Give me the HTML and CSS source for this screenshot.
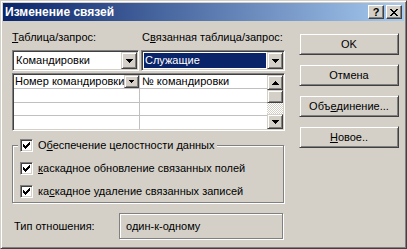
FILE: index.html
```html
<!DOCTYPE html>
<html>
<head>
	<title>Изменение связей</title>

	<link rel="stylesheet" href="styles.css">
</head>
<body>

	<div class="window">
		<div class="titlebar">
			<span class="title">Изменение связей</span>
			<span class="caption-btn help">?</span>
			<span class="caption-btn close">
				<svg width="8" height="7" viewBox="0 0 8 7" shape-rendering="crispEdges"><path d="M0 0h2v1H0z M6 0h2v1H6z M1 1h2v1H1z M5 1h2v1H5z M2 2h4v1H2z M3 3h2v1H3z M2 4h4v1H2z M1 5h2v1H1z M5 5h2v1H5z M0 6h2v1H0z M6 6h2v1H6z"/></svg>
			</span>
		</div>

		<div class="dialog">
			<div class="main">
				<div class="labels">
					<span class="label-left"><u>Т</u>аблица/запрос:</span>
					<span>С<u>в</u>язанная таблица/запрос:</span>
				</div>

				<div class="combos">
					<div class="combo combo-left">
						<span class="combo-text">Командировки</span>
						<span class="drop"><svg class="arrow" width="7" height="4" viewBox="0 0 7 4" shape-rendering="crispEdges"><path d="M0 0h7v1H0z M1 1h5v1H1z M2 2h3v1H2z M3 3h1v1H3z"/></svg></span>
					</div>
					<div class="combo combo-right">
						<span class="combo-text selected">Служащие</span>
						<span class="drop"><svg class="arrow" width="7" height="4" viewBox="0 0 7 4" shape-rendering="crispEdges"><path d="M0 0h7v1H0z M1 1h5v1H1z M2 2h3v1H2z M3 3h1v1H3z"/></svg></span>
					</div>
				</div>

				<!-- field pairs of the relation -->
				<div class="grid">
					<div class="grid-rows">
						<div class="row">
							<div class="cell cell-first">
								<span class="cell-text">Номер командировки</span>
								<span class="cell-drop"><svg width="5" height="3" viewBox="0 0 5 3" shape-rendering="crispEdges"><path d="M0 0h5v1H0z M1 1h3v1H1z M2 2h1v1H2z"/></svg></span>
							</div>
							<div class="cell">№ командировки</div>
						</div>
						<div class="row">
							<div class="cell cell-first"></div>
							<div class="cell"></div>
						</div>
						<div class="row">
							<div class="cell cell-first"></div>
							<div class="cell"></div>
						</div>
						<div class="row">
							<div class="cell cell-first"></div>
							<div class="cell"></div>
						</div>
					</div>
					<div class="scrollbar">
						<span class="scroll-btn scroll-up"><svg width="7" height="4" viewBox="0 0 7 4" shape-rendering="crispEdges"><path d="M3 0h1v1H3z M2 1h3v1H2z M1 2h5v1H1z M0 3h7v1H0z"/></svg></span>
						<span class="scroll-thumb"></span>
						<span class="scroll-track"></span>
						<span class="scroll-btn"><svg width="7" height="4" viewBox="0 0 7 4" shape-rendering="crispEdges"><path d="M0 0h7v1H0z M1 1h5v1H1z M2 2h3v1H2z M3 3h1v1H3z"/></svg></span>
					</div>
				</div>

				<div class="group">
					<div class="check legend">
						<span class="box"><svg width="7" height="7" viewBox="0 0 7 7" shape-rendering="crispEdges"><path d="M0 2h1v3H0z M1 3h1v3H1z M2 4h1v3H2z M3 3h1v3H3z M4 2h1v3H4z M5 1h1v3H5z M6 0h1v3H6z"/></svg></span>
						<span>О<u>б</u>еспечение целостности данных</span>
					</div>
					<div class="check">
						<span class="box"><svg width="7" height="7" viewBox="0 0 7 7" shape-rendering="crispEdges"><path d="M0 2h1v3H0z M1 3h1v3H1z M2 4h1v3H2z M3 3h1v3H3z M4 2h1v3H4z M5 1h1v3H5z M6 0h1v3H6z"/></svg></span>
						<span><u>к</u>аскадное обновление связанных полей</span>
					</div>
					<div class="check">
						<span class="box"><svg width="7" height="7" viewBox="0 0 7 7" shape-rendering="crispEdges"><path d="M0 2h1v3H0z M1 3h1v3H1z M2 4h1v3H2z M3 3h1v3H3z M4 2h1v3H4z M5 1h1v3H5z M6 0h1v3H6z"/></svg></span>
						<span>ка<u>с</u>кадное удаление связанных записей</span>
					</div>
				</div>

				<div class="relation">
					<span class="relation-label">Тип отношения:</span>
					<span class="relation-value">один-к-одному</span>
				</div>
			</div>

			<div class="buttons">
				<span class="btn">OK</span>
				<span class="btn">Отмена</span>
				<span class="btn">Объ<u>е</u>динение...</span>
				<span class="btn"><u>Н</u>овое..</span>
			</div>
		</div>
	</div>

</body>
</html>
```

FILE: styles.css
```css
* {
	box-sizing: border-box;
}
body {
	margin: 0;
	font: 11px/13px "Liberation Sans", Arial, sans-serif;
	color: #000;
}
u {
	text-decoration: underline;
	text-underline-offset: 1px;
}

/* window frame */
.window {
	width: 407px;
	height: 249px;
	padding: 2px;
	background: #d4d0c8;
	border: 1px solid;
	border-color: #d4d0c8 #404040 #404040 #d4d0c8;
	box-shadow: inset 1px 1px #fff, inset -1px -1px #808080;
	display: flex;
	flex-direction: column;
}
.titlebar {
	height: 18px;
	padding: 0 2px;
	display: flex;
	align-items: center;
	background: linear-gradient(to right, #0a246a, #a6caf0);
	color: #fff;
}
.title {
	flex: 1;
	font-size: 12px;
	font-weight: bold;
}
.caption-btn {
	width: 16px;
	height: 14px;
	display: flex;
	align-items: center;
	justify-content: center;
	color: #000;
	font-weight: bold;
	background: #d4d0c8;
	border: 1px solid;
	border-color: #fff #404040 #404040 #fff;
	box-shadow: inset -1px -1px #808080;
}
.help {
	margin-right: 2px;
}

/* dialog body */
.dialog {
	flex: 1;
	display: flex;
	padding: 10px 5px 0 9px;
}
.main {
	width: 273px;
}
.labels {
	display: flex;
	height: 13px;
}
.label-left {
	width: 130px;
}

.combos {
	display: flex;
	gap: 2px;
	margin-top: 6px;
}
.combo {
	height: 21px;
	display: flex;
	padding: 1px;
	background: #fff;
	border: 1px solid;
	border-color: #808080 #fff #fff #808080;
	box-shadow: inset 1px 1px #404040, inset -1px -1px #d4d0c8;
}
.combo-left {
	width: 127px;
}
.combo-right {
	width: 144px;
}
.combo-text {
	flex: 1;
	margin: 1px;
	padding-left: 1px;
	line-height: 15px;
}
.combo-text.selected {
	background: #0a246a;
	color: #fff;
}
.drop,
.scroll-btn,
.scroll-thumb,
.cell-drop,
.btn {
	background: #d4d0c8;
	border: 1px solid;
	border-color: #d4d0c8 #404040 #404040 #d4d0c8;
	box-shadow: inset 1px 1px #fff, inset -1px -1px #808080;
}
.drop {
	width: 16px;
	height: 17px;
	display: flex;
	align-items: center;
	justify-content: center;
}

.grid {
	height: 58px;
	margin-top: 2px;
	display: flex;
	padding: 1px;
	background: #fff;
	border: 1px solid;
	border-color: #808080 #fff #fff #808080;
	box-shadow: inset 1px 1px #404040, inset -1px -1px #d4d0c8;
}
.grid-rows {
	flex: 1;
}
.row {
	display: flex;
	height: 14px;
	border-bottom: 1px solid #c0c0c0;
}
.row:nth-child(3) {
	height: 13px;
}
.row:last-child {
	height: 13px;
	border-bottom: 0;
}
.cell {
	flex: 1;
	padding-left: 2px;
}
.cell-first {
	flex: none;
	width: 126px;
	display: flex;
	padding-left: 1px;
	border-right: 1px solid #c0c0c0;
}
.cell-text {
	flex: 1;
	overflow: hidden;
	white-space: nowrap;
}
.cell-drop {
	width: 15px;
	height: 13px;
	display: flex;
	align-items: center;
	justify-content: center;
}

.scrollbar {
	width: 16px;
	display: flex;
	flex-direction: column;
}
.scroll-btn {
	height: 15px;
	display: flex;
	align-items: center;
	justify-content: center;
}
.scroll-thumb {
	height: 13px;
}
.scroll-track {
	flex: 1;
	background: repeating-conic-gradient(#fff 0 25%, #d4d0c8 0 50%) 0 0 / 2px 2px;
}

/* referential integrity group */
.group {
	width: 272px;
	margin-top: 14px;
	padding: 0 0 4px 7px;
	border: 1px solid #808080;
	box-shadow: 1px 1px #fff, inset 1px 1px #fff;
}
.check {
	display: flex;
	align-items: center;
	gap: 5px;
	height: 13px;
	margin-top: 10px;
}
.check.legend {
	width: fit-content;
	margin: -7px 0 0 -2px;
	padding: 0 3px 0 2px;
	background: #d4d0c8;
}
.box {
	width: 13px;
	height: 13px;
	display: flex;
	align-items: center;
	justify-content: center;
	background: #fff;
	border: 1px solid;
	border-color: #808080 #fff #fff #808080;
	box-shadow: inset 1px 1px #404040, inset -1px -1px #d4d0c8;
}

.relation {
	display: flex;
	align-items: center;
	margin-top: 10px;
}
.relation-label {
	width: 107px;
	padding-left: 2px;
}
.relation-value {
	width: 164px;
	height: 26px;
	display: flex;
	align-items: center;
	padding-left: 6px;
	border: 1px solid #808080;
	box-shadow: 1px 1px #fff, inset 1px 1px #fff;
}

/* command buttons */
.buttons {
	display: flex;
	flex-direction: column;
	gap: 9px;
	margin-left: 14px;
	padding-top: 2px;
}
.btn {
	width: 100px;
	height: 22px;
	display: flex;
	align-items: center;
	justify-content: center;
}
```
